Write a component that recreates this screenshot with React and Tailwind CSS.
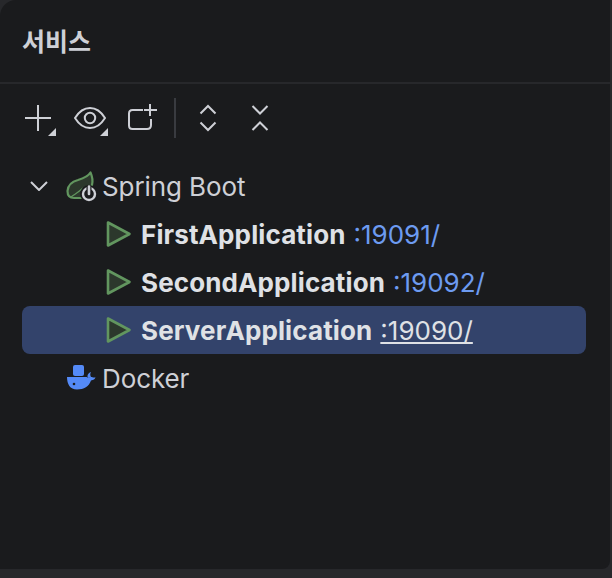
import React from 'react';

const ink = '#ced0d6';
const panel = '#1a1b1d';

const Caret = () => (
  <svg className="absolute right-2 bottom-[-2px]" width="8" height="8" viewBox="0 0 8 8">
    <polygon points="8,0 8,8 0,8" fill={ink} />
  </svg>
);

const ToolBtn = ({ children }) => (
  <div className="relative flex h-8 w-[52px] shrink-0 items-center justify-center">{children}</div>
);

const RunIcon = () => (
  <svg width="26" height="28" viewBox="0 0 26 28" className="shrink-0">
    <path d="M2 2.5 L23.5 14 L2 25.5 Z" fill="#2c382c" stroke="#62965f" strokeWidth="2.6" strokeLinejoin="round" />
  </svg>
);

const SpringIcon = () => (
  <svg width="32" height="32" viewBox="0 0 32 32" className="shrink-0">
    <path d="M24.5 2.5 C22 7 17 8.5 12 10 C6 11.5 2 15 1.5 21 C1.5 26 4 28 8 28 H18 L26 15 C27 11 26.5 7 24.5 2.5 Z" fill="#2c382c" stroke="#62965f" strokeWidth="2.2" strokeLinejoin="round" />
    <path d="M5 27 C9 24 13 22 17 18" fill="none" stroke="#62965f" strokeWidth="1.2" />
    <circle cx="23" cy="24" r="9" fill={panel} />
    <circle cx="23" cy="24" r="6" fill="none" stroke={ink} strokeWidth="2.4" />
    <path d="M23 16.5 V24" stroke={panel} strokeWidth="5" />
    <path d="M23 16.5 V24" stroke={ink} strokeWidth="2.6" strokeLinecap="round" />
  </svg>
);

const DockerIcon = () => (
  <svg width="30" height="26" viewBox="0 0 30 26" className="shrink-0">
    <rect x="7" y="0" width="11" height="11" rx="2" fill="#548af7" />
    <path d="M1 12 H20 C21 12 21.5 12.3 22 13 C23 12.2 25 11.8 26 12 C27 12.5 28 12.8 29.5 12.3 C29 14 27.5 15.2 25 15.5 C23 21.5 18 24.5 11 24.5 C4 24.5 1 19 1 12 Z" fill="#548af7" />
    <circle cx="8" cy="19" r="1.3" fill={panel} />
    <path d="M25 7 C24 9 24 10 25 12 L22 13 C21 11 21.5 8.5 25 7 Z" fill="#548af7" />
  </svg>
);

const AppRow = ({ name, port, selected }) => (
  <div className={`flex h-12 items-center rounded-lg pl-[84px] ${selected ? 'bg-[#33436b]' : ''}`}>
    <RunIcon />
    <span className="ml-[9px] font-bold tracking-[0.12px] text-[#dfe1e5]">{name}</span>
    <span className={`ml-2 tracking-[0px] ${selected ? 'text-[#dfe1e5] underline underline-offset-2' : 'text-[#6d9bf1]'}`}>{port}</span>
  </div>
);

export default function App() {
  return (
    <div className="h-[578px] w-[612px] overflow-hidden bg-[#27282b] font-['Inter',sans-serif] text-[26px] tracking-[-0.1px]">
      <div className="mr-[2px] h-[569px] rounded-tl-2xl rounded-br-lg bg-[#1a1b1d] pt-[1px]">
        <div className="flex h-[83px] items-center border-b-2 border-[#27282b] pl-[22px] pb-[2px]">
          <h1 className="font-['Noto_Sans_CJK_KR',sans-serif] text-[25px] font-bold tracking-normal text-[#ced0d6]">서비스</h1>
        </div>

        <div className="flex h-[68px] items-center pl-[12px]">
          <ToolBtn>
            <svg width="26" height="26" viewBox="0 0 26 26">
              <path d="M13 0 V26 M0 13 H26" stroke={ink} strokeWidth="2" />
            </svg>
            <Caret />
          </ToolBtn>
          <ToolBtn>
            <svg width="32" height="22" viewBox="0 0 32 22" fill="none" stroke={ink} strokeWidth="2">
              <path d="M1 11 C5 4.5 10 1 16 1 C22 1 27 4.5 31 11 C27 17.5 22 21 16 21 C10 21 5 17.5 1 11 Z" />
              <circle cx="16" cy="11" r="5.2" />
            </svg>
            <Caret />
          </ToolBtn>
          <ToolBtn>
            <svg width="30" height="26" viewBox="0 0 30 26" className="ml-[2px] -mt-[2px]" fill="none" stroke={ink} strokeWidth="2">
              <path d="M15 6 H4.5 Q1 6 1 9.5 V21.5 Q1 25 4.5 25 H19 Q23 25 23 21 V15" />
              <path d="M22 0 V12 M16 6 H29" />
            </svg>
          </ToolBtn>
          <div className="mx-[6px] h-10 w-[2px] bg-[#393b40]" />
          <ToolBtn>
            <svg width="18" height="28" viewBox="0 0 18 28" fill="none" stroke={ink} strokeWidth="2">
              <path d="M1.5 9.5 L9 2 L16.5 9.5 M1.5 18.5 L9 26 L16.5 18.5" />
            </svg>
          </ToolBtn>
          <ToolBtn>
            <svg width="18" height="28" viewBox="0 0 18 28" fill="none" stroke={ink} strokeWidth="2">
              <path d="M1.5 2 L9 9.5 L16.5 2 M1.5 26 L9 18.5 L16.5 26" />
            </svg>
          </ToolBtn>
        </div>

        <div className="mt-[10px] mr-6 ml-[22px]">
          <div className="flex h-12 items-center text-[#ced0d6]">
            <svg width="18" height="10" viewBox="0 0 18 10" className="ml-[8px]" fill="none" stroke={ink} strokeWidth="2">
              <path d="M1 1 L9 9 L17 1" />
            </svg>
            <div className="ml-[18px]"><SpringIcon /></div>
            <span className="ml-[4px]">Spring Boot</span>
          </div>
          <AppRow name="FirstApplication" port=":19091/" />
          <AppRow name="SecondApplication" port=":19092/" />
          <AppRow name="ServerApplication" port=":19090/" selected />
          <div className="flex h-12 items-center pl-[44px] text-[#ced0d6]">
            <DockerIcon />
            <span className="ml-[6px]">Docker</span>
          </div>
        </div>
      </div>
    </div>
  );
}
